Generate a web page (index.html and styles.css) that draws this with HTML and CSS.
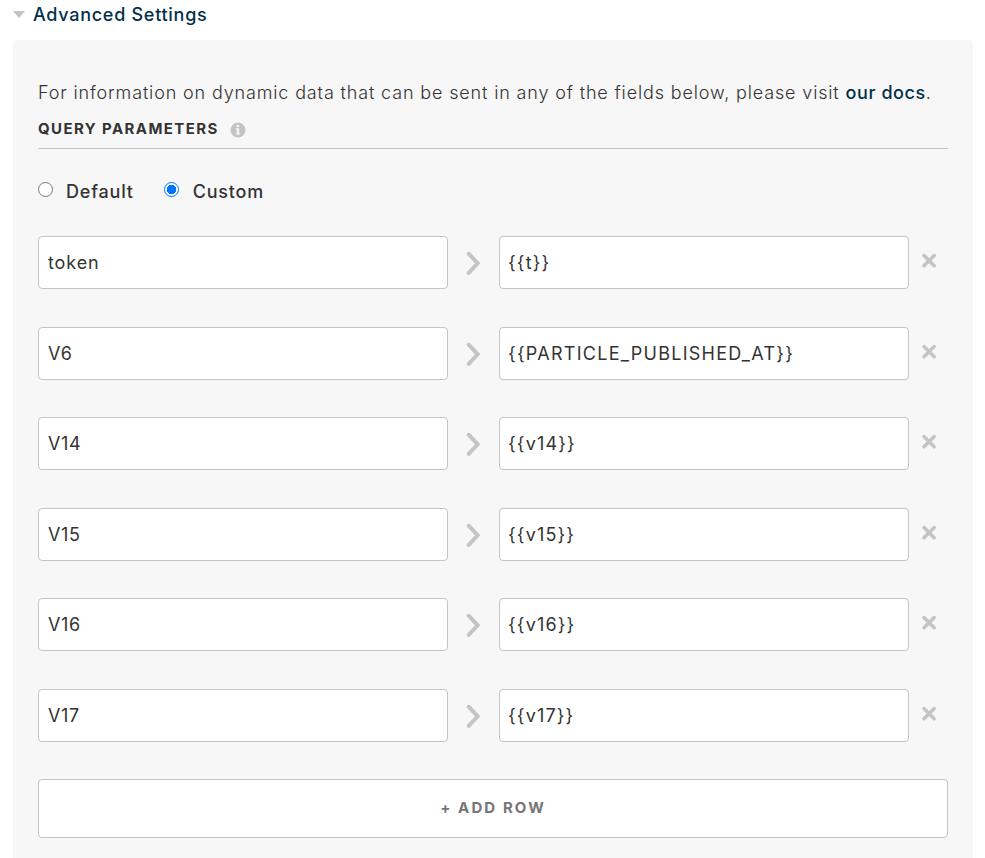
FILE: index.html
```
<!DOCTYPE html>
<html lang="en">
<head>
<meta charset="utf-8">
<title>Advanced Settings</title>
<link rel="stylesheet" href="styles.css">
</head>
<body>
<svg class="defs" width="0" height="0" aria-hidden="true">
  <symbol id="chevron" viewBox="0 0 16 24"><path d="M3.700 2.700 12.700 12.300 3.700 21.900" fill="none" stroke="currentColor" stroke-width="3.900" stroke-linecap="round"/></symbol>
  <symbol id="remove" viewBox="0 0 16 16"><path d="M3 2.500 13.200 12.700M13.200 2.500 3 12.700" fill="none" stroke="currentColor" stroke-width="3.500" stroke-linecap="round"/></symbol>
</svg>
<header class="toggle"><span class="caret"></span><h1 class="title">Advanced Settings</h1></header>
<main class="panel">
  <p class="intro"><span>For information on dynamic data that can be sent in any of the fields below, please visit </span><a class="docs">our docs</a>.</p>
  <div class="section">
    <h2 class="heading">QUERY PARAMETERS</h2>
    <svg class="info" width="16" height="16" viewBox="0 0 16 16"><circle cx="8" cy="8" r="7.5" fill="#c4c4c4"/><path d="M6.700 3h2.400v2H6.700zM5.900 6.300h3.200v5h1v1.200H5.900v-1.200h1V7.500h-1z" fill="#f7f7f7"/></svg>
  </div>
  <div class="choices">
    <label class="choice"><span class="radio"></span><span class="default">Default</span></label>
    <label class="choice"><span class="radio checked"></span><span class="custom">Custom</span></label>
  </div>
  <div class="rows">
    <div class="row"><div class="field token">token</div><svg class="chevron"><use href="#chevron"/></svg><div class="field value">{{t}}</div><svg class="remove"><use href="#remove"/></svg></div>
    <div class="row"><div class="field">V6</div><svg class="chevron"><use href="#chevron"/></svg><div class="field value long">{{PARTICLE_PUBLISHED_AT}}</div><svg class="remove"><use href="#remove"/></svg></div>
    <div class="row"><div class="field">V14</div><svg class="chevron"><use href="#chevron"/></svg><div class="field value">{{v14}}</div><svg class="remove"><use href="#remove"/></svg></div>
    <div class="row"><div class="field">V15</div><svg class="chevron"><use href="#chevron"/></svg><div class="field value">{{v15}}</div><svg class="remove"><use href="#remove"/></svg></div>
    <div class="row"><div class="field">V16</div><svg class="chevron"><use href="#chevron"/></svg><div class="field value">{{v16}}</div><svg class="remove"><use href="#remove"/></svg></div>
    <div class="row"><div class="field">V17</div><svg class="chevron"><use href="#chevron"/></svg><div class="field value">{{v17}}</div><svg class="remove"><use href="#remove"/></svg></div>
  </div>
  <button class="add" type="button">+ ADD ROW</button>
</main>
</body>
</html>
```
FILE: styles.css
```
* { box-sizing: border-box; }
body { margin: 0; height: 858px; overflow: hidden; background: #fff; color: #333; font-family: Inter, "Liberation Sans", sans-serif; font-size: 18px; }
h1, h2, p { margin: 0; }
.defs { display: block; }
.toggle { display: flex; align-items: center; height: 40px; padding: 0 0 11px 13px; }
.caret { border: 6px solid transparent; border-top: 7px solid #c4c4c4; border-bottom: 0; margin-right: 8px; }
.title { font-size: 18px; line-height: 28px; font-weight: 500; color: #042f4b; letter-spacing: 0.72px; }
.panel { width: 960px; height: 830px; margin-left: 13px; padding: 39px 25px 0; background: #f7f7f7; border-radius: 4px 4px 0 0; }
.intro { font-weight: 300; line-height: 28px; white-space: nowrap; letter-spacing: 0.85px; }
.docs { font-weight: 500; color: #042f4b; letter-spacing: 0.6px; }
.section { display: flex; align-items: center; height: 42px; padding-top: 5px; border-bottom: 1px solid #c4c4c4; }
.heading { font-size: 15px; line-height: 18px; padding-bottom: 2px; font-weight: 700; letter-spacing: 1.4px; }
.info { margin-left: 11px; }
.choices { display: flex; gap: 30px; padding-top: 28px; height: 87.4px; }
.choice { display: flex; line-height: 30px; font-weight: 500; letter-spacing: 0.8px; }
.radio { width: 15px; height: 15px; margin: 5px 13px 0 0; border: 1px solid #767676; border-radius: 50%; background: #fff; }
.checked { margin-right: 14px; border-color: #0075ff; background: radial-gradient(circle, #0075ff 4.5px, #fff 5px); }
.rows { display: grid; grid-auto-rows: 90.5px; }
.row { display: grid; grid-template-columns: 410px 51px 410px 1fr; align-items: start; }
.field { height: 53px; padding: 0 9px; line-height: 52px; background: #fff; border: 1px solid #c4c4c4; border-radius: 4px; white-space: nowrap; letter-spacing: 0.6px; }
.token { letter-spacing: 0.9px; }
.value { padding-left: 8px; letter-spacing: 1.15px; }
.long { letter-spacing: 1.26px; }
.chevron { width: 16px; height: 24px; margin: 15px 0 0 17px; color: #c4c4c4; }
.remove { width: 16px; height: 16px; margin: 17px 0 0 12px; color: #c4c4c4; }
.add { display: block; width: 910px; height: 59px; padding: 0 0 2px; background: #fff; border: 1px solid #c4c4c4; border-radius: 4px; color: #767676; font: 700 15px Inter, "Liberation Sans", sans-serif; letter-spacing: 2.1px; }
```
